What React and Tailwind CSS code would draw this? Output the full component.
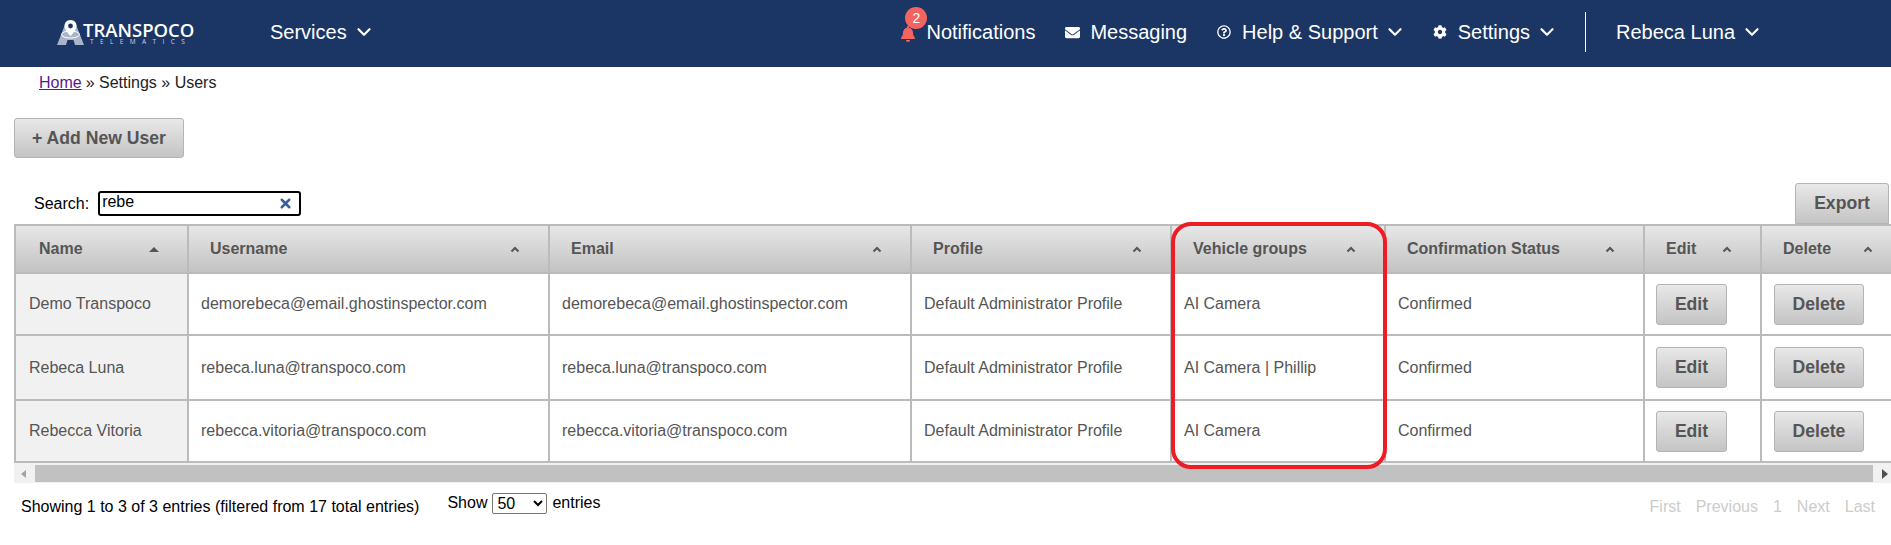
import { ChevronDown, X } from 'lucide-react';
import { FaBell, FaCog, FaEnvelope, FaRegQuestionCircle } from 'react-icons/fa';

const columns = [
  { label: 'Name', width: 173, sorted: true },
  { label: 'Username', width: 361 },
  { label: 'Email', width: 362 },
  { label: 'Profile', width: 260 },
  { label: 'Vehicle groups', width: 214 },
  { label: 'Confirmation Status', width: 259 },
  { label: 'Edit', width: 117 },
  { label: 'Delete', width: 140 },
];

const users = [
  { name: 'Demo Transpoco', username: 'demorebeca@email.ghostinspector.com', groups: 'AI Camera', height: 'h-[62px]' },
  { name: 'Rebeca Luna', username: 'rebeca.luna@transpoco.com', groups: 'AI Camera | Phillip', height: 'h-[65px]' },
  { name: 'Rebecca Vitoria', username: 'rebecca.vitoria@transpoco.com', groups: 'AI Camera', height: 'h-[62px]' },
];

const buttonClass =
  'rounded-[3px] border border-[#b4b4b4] bg-gradient-to-b from-[#e8e8e8] to-[#c4c4c4] font-bold text-[17.6px] text-[#555]';

function Logo() {
  return (
    <div className="flex items-start">
      <svg width="27" height="25" viewBox="0 0 27 25" className="shrink-0">
        <path d="M9 2 L0 25 H9 L10.5 20 H16.5 L18 25 H27 L18 2 Z" fill="#a9b4c9" />
        <path d="M13.5 0 C9.5 0 7.5 3 7.5 6 C7.5 10 13.5 16 13.5 16 C13.5 16 19.5 10 19.5 6 C19.5 3 17.5 0 13.5 0 Z" fill="#fff" />
        <circle cx="13.5" cy="6" r="2.4" fill="#1b3564" />
        <ellipse cx="13.5" cy="14.5" rx="9" ry="3.5" fill="none" stroke="#fff" strokeWidth="1" />
      </svg>
      <div className="ml-[-1px] mt-[2px] flex flex-col font-['Open_Sans',sans-serif] text-white">
        <span className="text-[18.5px] leading-[15px] font-semibold">TRANSPOCO</span>
        <span className="mt-[1px] ml-[7px] text-[6.5px] leading-[7px] tracking-[6.4px] text-[#c9d1e0]">TELEMATICS</span>
      </div>
    </div>
  );
}

function NavItem({ icon, label, chevron, className = '' }) {
  return (
    <div className={`flex items-center ${className}`}>
      {icon}
      <span>{label}</span>
      {chevron && <ChevronDown className="ml-[6px] text-white" size={22} strokeWidth={2.4} />}
    </div>
  );
}

function SortIcon({ filled }) {
  return (
    <svg width="10" height="7" viewBox="0 0 10 7" className="shrink-0">
      {filled ? (
        <path d="M5 1 L10 6 H0 Z" fill="#555" />
      ) : (
        <path d="M1.5 5.5 L5 2 L8.5 5.5" fill="none" stroke="#555" strokeWidth="2" />
      )}
    </svg>
  );
}

export default function App() {
  return (
    <div className="relative h-[545px] overflow-hidden bg-white font-['Liberation_Sans',Arial,sans-serif] text-[16px] text-black">
      <header className="flex h-[67px] items-center bg-[#1b3564] pb-[3px] text-[20px] text-white">
        <div className="ml-[57px] w-[213px]">
          <Logo />
        </div>
        <NavItem label="Services" chevron />
        <div className="ml-auto flex items-center">
          <NavItem
            className="relative"
            icon={
              <>
                <FaBell className="mt-[3px] mr-[10px] text-[#f4645f]" size={16} />
                <span className="absolute top-[-10px] left-[5px] flex h-[22px] w-[22px] items-center justify-center rounded-full bg-[#f4645f] text-[14px] text-white">
                  2
                </span>
              </>
            }
            label="Notifications"
          />
          <NavItem
            className="ml-[30px]"
            icon={<FaEnvelope className="mr-[10px] text-white" size={15} />}
            label="Messaging"
          />
          <NavItem
            className="ml-[30px]"
            icon={<FaRegQuestionCircle className="mr-[11px]" size={14} />}
            label="Help & Support"
            chevron
          />
          <NavItem
            className="ml-[27px]"
            icon={<FaCog className="mr-[11px] text-white" size={14} />}
            label="Settings"
            chevron
          />
          <div className="ml-[27px] h-[40px] w-px bg-white" />
          <NavItem className="mr-[128px] ml-[30px]" label="Rebeca Luna" chevron />
        </div>
      </header>

      <div className="ml-[39px] flex h-[30px] items-center pt-[2px]">
        <a href="#home" className="text-[#551a8b] underline">
          Home
        </a>
        <span className="ml-[4px] text-[#222]">» Settings » Users</span>
      </div>

      <button className={`${buttonClass} mt-[21px] ml-[14px] block h-[40px] w-[170px]`}>+ Add New User</button>

      <div className="mt-[25px] flex h-[41px] items-start justify-between pl-[34px]">
        <label className="mt-[8px] flex h-[25px] items-center">
          Search:
          <span className="ml-[9px] flex h-[25px] w-[203px] items-center justify-between rounded-[3px] border-2 border-black pr-[6px] pl-[2px]">
            <span className="mt-[-3px]">rebe</span>
            <X className="text-[#3a5f9f]" size={15} strokeWidth={4} />
          </span>
        </label>
        <button className={`${buttonClass} mr-[2px] h-[41px] w-[94px] rounded-b-none`}>Export</button>
      </div>

      <div className="ml-[14px] overflow-hidden">
        <table className="w-[1886px] table-fixed border-collapse text-[#555]">
          <colgroup>
            {columns.map((col) => (
              <col key={col.label} style={{ width: col.width }} />
            ))}
          </colgroup>
          <thead>
            <tr className="h-[48px] bg-gradient-to-b from-[#e8e8e8] to-[#c2c2c2]">
              {columns.map((col) => (
                <th key={col.label} className="border-2 border-r border-[#bbb] p-0 text-left font-bold">
                  <div className={`flex items-center justify-between pr-[28px] ${col.sorted ? 'pl-[23px]' : 'pl-[21px]'}`}>
                    <span>{col.label}</span>
                    <SortIcon filled={col.sorted} />
                  </div>
                </th>
              ))}
            </tr>
          </thead>
          <tbody>
            {users.map((user) => (
              <tr key={user.username} className={user.height}>
                <td className="border-2 border-[#bbb] bg-[#f1f1f1] pl-[13px]">{user.name}</td>
                <td className="border-2 border-[#bbb] pl-[12px]">{user.username}</td>
                <td className="border-2 border-[#bbb] pl-[12px]">{user.username}</td>
                <td className="border-2 border-[#bbb] pl-[12px]">Default Administrator Profile</td>
                <td className="border-2 border-[#bbb] pl-[12px]">{user.groups}</td>
                <td className="border-2 border-[#bbb] pl-[12px]">Confirmed</td>
                <td className="border-2 border-[#bbb] pl-[11px]">
                  <button className={`${buttonClass} h-[41px] w-[71px]`}>Edit</button>
                </td>
                <td className="border-2 border-[#bbb] pl-[12px]">
                  <button className={`${buttonClass} h-[41px] w-[90px]`}>Delete</button>
                </td>
              </tr>
            ))}
          </tbody>
        </table>

        <div className="flex h-[20px] items-center bg-[#f1f1f1] pt-[1px]">
          <svg width="21" height="10" viewBox="0 0 21 10" className="shrink-0">
            <path d="M12 1 V9 L7 5 Z" fill="#a3a3a3" />
          </svg>
          <div className="h-[17px] flex-1 bg-[#c1c1c1]" />
          <svg width="18" height="10" viewBox="0 0 18 10" className="shrink-0">
            <path d="M9 0 V10 L15 5 Z" fill="#505050" />
          </svg>
        </div>
      </div>

      <div className="mt-[8px] flex items-start pl-[21px]">
        <span className="mt-[4px]">Showing 1 to 3 of 3 entries (filtered from 17 total entries)</span>
        <span className="ml-[28px] flex items-center">
          Show
          <select className="mx-[5px] h-[21px] w-[55px] rounded-[2px] border border-[#767676] bg-white text-[16px] leading-none" defaultValue="50">
            <option>50</option>
          </select>
          entries
        </span>
        <div className="mt-[4px] mr-[16px] ml-auto flex gap-[15px] text-[#ccc]">
          <span>First</span>
          <span>Previous</span>
          <span>1</span>
          <span>Next</span>
          <span>Last</span>
        </div>
      </div>

      {/* red highlight drawn over the Vehicle groups column */}
      <div className="absolute top-[222px] left-[1171px] h-[247px] w-[216px] rounded-[20px] border-4 border-[#ee1c25]" />
    </div>
  );
}
